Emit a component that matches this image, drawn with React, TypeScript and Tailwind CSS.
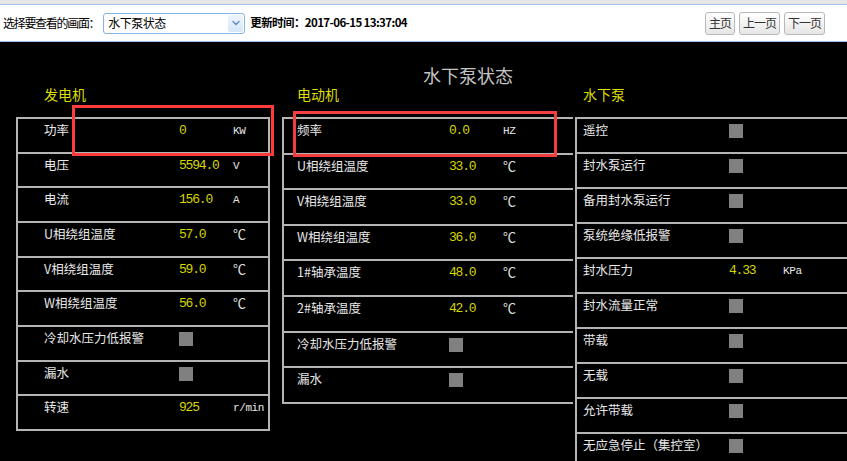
import { ChevronDown } from "lucide-react";

type Row = { label: string; value?: string; unit?: string; box?: boolean };

const generator: Row[] = [
  { label: "功率", value: "0", unit: "KW" },
  { label: "电压", value: "5594.0", unit: "V" },
  { label: "电流", value: "156.0", unit: "A" },
  { label: "U相绕组温度", value: "57.0", unit: "℃" },
  { label: "V相绕组温度", value: "59.0", unit: "℃" },
  { label: "W相绕组温度", value: "56.0", unit: "℃" },
  { label: "冷却水压力低报警", box: true },
  { label: "漏水", box: true },
  { label: "转速", value: "925", unit: "r/min" },
];

const motor: Row[] = [
  { label: "频率", value: "0.0", unit: "HZ" },
  { label: "U相绕组温度", value: "33.0", unit: "℃" },
  { label: "V相绕组温度", value: "33.0", unit: "℃" },
  { label: "W相绕组温度", value: "36.0", unit: "℃" },
  { label: "1#轴承温度", value: "48.0", unit: "℃" },
  { label: "2#轴承温度", value: "42.0", unit: "℃" },
  { label: "冷却水压力低报警", box: true },
  { label: "漏水", box: true },
];

const pump: Row[] = [
  { label: "遥控", box: true },
  { label: "封水泵运行", box: true },
  { label: "备用封水泵运行", box: true },
  { label: "泵统绝缘低报警", box: true },
  { label: "封水压力", value: "4.33", unit: "KPa" },
  { label: "封水流量正常", box: true },
  { label: "带载", box: true },
  { label: "无载", box: true },
  { label: "允许带载", box: true },
  { label: "无应急停止（集控室）", box: true },
  { label: "", box: false },
];

function Table({
  rows,
  rowClass,
  labelClass,
  wrapClass,
}: {
  rows: Row[];
  rowClass: string;
  labelClass: string;
  wrapClass: string;
}) {
  return (
    <div className={wrapClass}>
      {rows.map((r, i) => (
        <div key={i} className={`flex items-start border-t-2 border-[#b4b4b4] pt-[3px] ${rowClass}`}>
          <span className={`shrink-0 text-[12.5px] leading-[16px] text-[#e8e8e8] ${labelClass}`}>{r.label}</span>
          {r.box ? (
            <span className="mt-[2px] block h-[14px] w-[14px] bg-[#808080]" />
          ) : (
            <>
              <span className="w-[54px] shrink-0 pt-[1px] font-['Liberation_Mono',monospace] text-[13px] leading-[16px] tracking-[-1.2px] text-[#d6d600]">
                {r.value}
              </span>
              {r.unit === "℃" ? (
                <span className="text-[13px] leading-[16px] text-[#e0e0e0]">℃</span>
              ) : (
                <span className="pt-[1px] font-['Liberation_Mono',monospace] text-[11px] leading-[16px] tracking-[-0.4px] text-[#e8e8e8]">
                  {r.unit}
                </span>
              )}
            </>
          )}
        </div>
      ))}
    </div>
  );
}

export default function App() {
  return (
    <div className="relative h-[461px] w-[847px] overflow-hidden bg-black font-['Noto_Sans_CJK_SC',sans-serif]">
      {/* Top toolbar */}
      <div className="h-1 bg-[#e6e6e6]" />
      <div className="flex h-[38px] items-center border-y border-[#9ec0ea] bg-white pl-[3px] pr-[22px] text-[12px] text-black">
        <span className="tracking-[-1.3px]">选择要查看的画面：</span>
        <div className="ml-[4px] flex h-[21px] w-[142px] shrink-0 items-center justify-between rounded-[3px] border border-[#86b3e6] pl-[4px] pr-[1px]">
          <span className="tracking-[-0.5px]">水下泵状态</span>
          <span className="flex h-[17px] w-[15px] items-center justify-center rounded-[2px] bg-gradient-to-b from-[#eef5fc] to-[#d6e6f7]">
            <ChevronDown size={12} strokeWidth={2.5} className="text-[#5a88bf]" />
          </span>
        </div>
        <span className="ml-[5px] text-[11.5px] font-bold tracking-[-0.6px]">更新时间：2017-06-15 13:37:04</span>
        <div className="ml-auto flex gap-[4px]">
          {["主页", "上一页", "下一页"].map((b) => (
            <button
              key={b}
              className="h-[23px] rounded-[3px] border border-[#b8b8b8] bg-gradient-to-b from-white to-[#e6e6e6] px-[3px] text-[12px] leading-none tracking-[-1px] text-[#333]"
            >
              {b}
            </button>
          ))}
        </div>
      </div>

      {/* Black status area */}
      <div className="pt-[21px]">
        <div className="pl-[423px] text-[18px] leading-[24px] text-[#c4c4c4]">水下泵状态</div>
        <div className="mt-[-2px] flex">
          <div className="ml-[16px] w-[254px] shrink-0">
            <div className="pl-[28px] text-[14px] leading-[18px] text-[#dede00]">发电机</div>
            <Table
              rows={generator}
              wrapClass="mt-[14px] border-x-2 border-b-2 border-[#b4b4b4]"
              rowClass="h-[34.67px]"
              labelClass="w-[161px] pl-[26px]"
            />
          </div>
          <div className="ml-[12px] w-[291px] shrink-0">
            <div className="pl-[15px] text-[14px] leading-[18px] text-[#dede00]">电动机</div>
            <Table
              rows={motor}
              wrapClass="mt-[14px] border-l-2 border-b-2 border-[#b4b4b4]"
              rowClass="h-[35.6px]"
              labelClass="w-[165px] pl-[13px]"
            />
          </div>
          <div className="ml-[2px] w-[300px] shrink-0">
            <div className="pl-[8px] text-[14px] leading-[18px] text-[#dede00]">水下泵</div>
            <Table
              rows={pump}
              wrapClass="mt-[14px] border-l-2 border-[#b4b4b4]"
              rowClass="h-[35px]"
              labelClass="w-[152px] pl-[6px]"
            />
          </div>
        </div>
      </div>

      {/* Red highlight boxes */}
      <div className="absolute left-[72px] top-[105px] h-[51px] w-[202px] border-[3px] border-[#ff3c3c]" />
      <div className="absolute left-[293px] top-[111px] h-[46px] w-[264px] border-[3px] border-[#f23e3e]" />
    </div>
  );
}
